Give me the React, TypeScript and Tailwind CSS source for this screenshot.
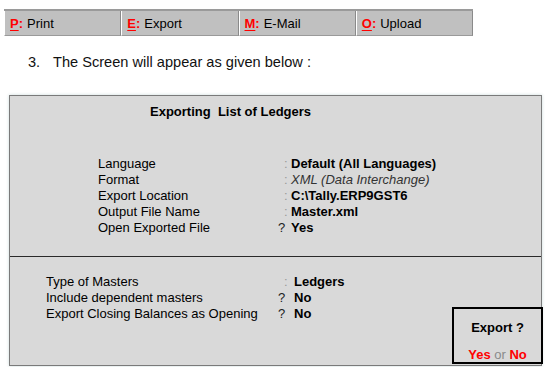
import React from "react";

const tools = [
  { k: "P", label: "Print" },
  { k: "E", label: "Export" },
  { k: "M", label: "E-Mail" },
  { k: "O", label: "Upload" },
];

const upper = [
  { label: "Language", sep: ":", value: "Default (All Languages)", style: "bold" },
  { label: "Format", sep: ":", value: "XML (Data Interchange)", style: "italic" },
  { label: "Export Location", sep: ":", value: "C:\\Tally.ERP9GST6", style: "bold" },
  { label: "Output File Name", sep: ":", value: "Master.xml", style: "bold" },
  { label: "Open Exported File", sep: "?", value: "Yes", style: "bold" },
];

const lower = [
  { label: "Type of Masters", sep: ":", value: "Ledgers" },
  { label: "Include dependent masters", sep: "?", value: "No" },
  { label: "Export Closing Balances as Opening", sep: "?", value: "No" },
];

function Sep({ s }: { s: string }) {
  return s === ":" ? (
    <span className="w-[14px] pl-[7px] text-[#9a9a9a]">:</span>
  ) : (
    <span className="w-[14px] pl-[1px] text-[#222]">?</span>
  );
}

export default function App() {
  return (
    <div className="w-[549px] h-[367px] bg-white overflow-hidden font-['Liberation_Sans',Arial,sans-serif] text-black">
      <div className="ml-[4px] mt-[9px] flex w-[469px] h-[27px] border-t-2 border-[#9a9a9a] bg-[#c0c0c0]">
        {tools.map((t) => (
          <div
            key={t.k}
            className="flex-1 flex items-center pl-[5px] border-l border-l-white border-r border-r-[#8a8a8a] border-b border-b-[#9a9a9a] text-[13px] leading-none"
          >
            <span className="font-bold text-[#ff0000] underline underline-offset-2">{t.k}</span>
            <span className="font-bold text-[#ff0000]">:</span>
            <span className="ml-[4px]">{t.label}</span>
          </div>
        ))}
      </div>

      <div className="mt-[18px] flex text-[14.6px] leading-[16px] text-[#111]">
        <span className="ml-[28px] w-[25px]">3.</span>
        <span>The Screen will appear as given below :</span>
      </div>

      <div className="ml-[9px] mt-[25px] w-[533px] h-[271px] border border-[#7a7a7a] bg-[#d9d9d9] flex flex-col shadow-[0_0_3px_rgba(200,215,215,0.9)]">
        <div className="h-[161px] border-b border-[#2a2a2a] text-[13px] leading-[16px]">
          <div className="mt-[8px] ml-[140px] font-bold">Exporting&nbsp; List of Ledgers</div>
          <div className="mt-[36px] flex flex-col">
            {upper.map((r) => (
              <div key={r.label} className="flex">
                <span className="ml-[88px] w-[179px]">{r.label}</span>
                <Sep s={r.sep} />
                <span
                  className={
                    r.style === "italic"
                      ? "italic text-[#333]"
                      : "font-bold"
                  }
                >
                  {r.value}
                </span>
              </div>
            ))}
          </div>
        </div>
        <div className="flex-1 flex justify-between items-end text-[13px] leading-[16px]">
          <div className="self-start mt-[17px] flex flex-col">
            {lower.map((r) => (
              <div key={r.label} className="flex">
                <span className="ml-[36px] w-[231px]">{r.label}</span>
                <Sep s={r.sep} />
                <span className="ml-[3px] font-bold">{r.value}</span>
              </div>
            ))}
          </div>
          <div className="mb-[1px] -mr-[2px] w-[91px] h-[57px] border-2 border-black flex flex-col items-center text-[13px] leading-[16px]">
            <div className="mt-[11px] font-bold">Export ?</div>
            <div className="mt-[11px] font-bold text-[#ff0000]">
              Yes <span className="font-normal text-[#8a8a8a]">or</span> No
            </div>
          </div>
        </div>
      </div>
    </div>
  );
}
